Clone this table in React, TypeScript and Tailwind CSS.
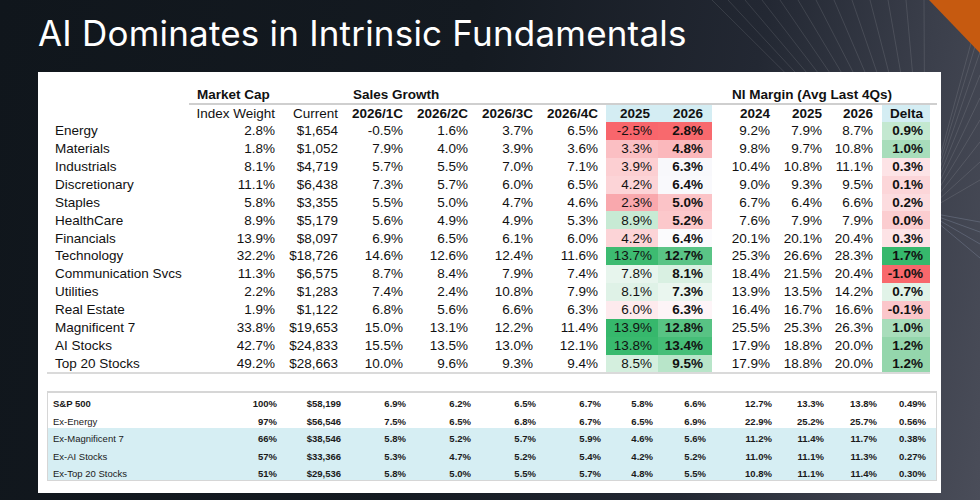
import React from 'react';

type Row = {
  label: string;
  vals: string[];
  c25: string;
  c26: string;
  cd: string;
};

const rows: Row[] = [
  { label: 'Energy', vals: ['2.8%', '$1,654', '-0.5%', '1.6%', '3.7%', '6.5%', '-2.5%', '2.8%', '9.2%', '7.9%', '8.7%', '0.9%'], c25: 'bg-[#f8666c]', c26: 'bg-[#f8696d]', cd: 'bg-[#c3e8d0]' },
  { label: 'Materials', vals: ['1.8%', '$1,052', '7.9%', '4.0%', '3.9%', '3.6%', '3.3%', '4.8%', '9.8%', '9.7%', '10.8%', '1.0%'], c25: 'bg-[#fbbfc3]', c26: 'bg-[#fbb8bc]', cd: 'bg-[#a8ddbb]' },
  { label: 'Industrials', vals: ['8.1%', '$4,719', '5.7%', '5.5%', '7.0%', '7.1%', '3.9%', '6.3%', '10.4%', '10.8%', '11.1%', '0.3%'], c25: 'bg-[#fccfd2]', c26: 'bg-[#f8f8fb]', cd: 'bg-[#fde3e6]' },
  { label: 'Discretionary', vals: ['11.1%', '$6,438', '7.3%', '5.7%', '6.0%', '6.5%', '4.2%', '6.4%', '9.0%', '9.3%', '9.5%', '0.1%'], c25: 'bg-[#fcd4d7]', c26: 'bg-[#f9f9fc]', cd: 'bg-[#fcd6d9]' },
  { label: 'Staples', vals: ['5.8%', '$3,355', '5.5%', '5.0%', '4.7%', '4.6%', '2.3%', '5.0%', '6.7%', '6.4%', '6.6%', '0.2%'], c25: 'bg-[#f9a8ad]', c26: 'bg-[#fbc3c7]', cd: 'bg-[#fcdcdf]' },
  { label: 'HealthCare', vals: ['8.9%', '$5,179', '5.6%', '4.9%', '4.9%', '5.3%', '8.9%', '5.2%', '7.6%', '7.9%', '7.9%', '0.0%'], c25: 'bg-[#c7ead4]', c26: 'bg-[#fcc8cb]', cd: 'bg-[#fbcdd0]' },
  { label: 'Financials', vals: ['13.9%', '$8,097', '6.9%', '6.5%', '6.1%', '6.0%', '4.2%', '6.4%', '20.1%', '20.1%', '20.4%', '0.3%'], c25: 'bg-[#fcd4d7]', c26: 'bg-[#fbfbfd]', cd: 'bg-[#fde3e6]' },
  { label: 'Technology', vals: ['32.2%', '$18,726', '14.6%', '12.6%', '12.4%', '11.6%', '13.7%', '12.7%', '25.3%', '26.6%', '28.3%', '1.7%'], c25: 'bg-[#3dbb71]', c26: 'bg-[#5ac486]', cd: 'bg-[#36b86c]' },
  { label: 'Communication Svcs', vals: ['11.3%', '$6,575', '8.7%', '8.4%', '7.9%', '7.4%', '7.8%', '8.1%', '18.4%', '21.5%', '20.4%', '-1.0%'], c25: 'bg-[#e7f5ed]', c26: 'bg-[#d9f0e2]', cd: 'bg-[#f8686c]' },
  { label: 'Utilities', vals: ['2.2%', '$1,283', '7.4%', '2.4%', '10.8%', '7.9%', '8.1%', '7.3%', '13.9%', '13.5%', '14.2%', '0.7%'], c25: 'bg-[#dff2e7]', c26: 'bg-[#eaf6ef]', cd: 'bg-[#e1f3e8]' },
  { label: 'Real Estate', vals: ['1.9%', '$1,122', '6.8%', '5.6%', '6.6%', '6.3%', '6.0%', '6.3%', '16.4%', '16.7%', '16.6%', '-0.1%'], c25: 'bg-[#fdeaed]', c26: 'bg-[#fdf4f7]', cd: 'bg-[#fbc6ca]' },
  { label: 'Magnificent 7', vals: ['33.8%', '$19,653', '15.0%', '13.1%', '12.2%', '11.4%', '13.9%', '12.8%', '25.5%', '25.3%', '26.3%', '1.0%'], c25: 'bg-[#36b86c]', c26: 'bg-[#58c384]', cd: 'bg-[#a8ddbb]' },
  { label: 'AI Stocks', vals: ['42.7%', '$24,833', '15.5%', '13.5%', '13.0%', '12.1%', '13.8%', '13.4%', '17.9%', '18.8%', '20.0%', '1.2%'], c25: 'bg-[#39ba6e]', c26: 'bg-[#46be78]', cd: 'bg-[#94d6ac]' },
  { label: 'Top 20 Stocks', vals: ['49.2%', '$28,663', '10.0%', '9.6%', '9.3%', '9.4%', '8.5%', '9.5%', '17.9%', '18.8%', '20.0%', '1.2%'], c25: 'bg-[#d4efde]', c26: 'bg-[#b8e5c9]', cd: 'bg-[#94d6ac]' },
];

const summary = [
  { label: 'S&P 500', bold: true, blue: false, vals: ['100%', '$58,199', '6.9%', '6.2%', '6.5%', '6.7%', '5.8%', '6.6%', '12.7%', '13.3%', '13.8%', '0.49%'] },
  { label: 'Ex-Energy', bold: false, blue: false, vals: ['97%', '$56,546', '7.5%', '6.5%', '6.8%', '6.7%', '6.5%', '6.9%', '22.9%', '25.2%', '25.7%', '0.56%'] },
  { label: 'Ex-Magnificent 7', bold: false, blue: true, vals: ['66%', '$38,546', '5.8%', '5.2%', '5.7%', '5.9%', '4.6%', '5.6%', '11.2%', '11.4%', '11.7%', '0.38%'] },
  { label: 'Ex-AI Stocks', bold: false, blue: true, vals: ['57%', '$33,366', '5.3%', '4.7%', '5.2%', '5.4%', '4.2%', '5.2%', '11.0%', '11.1%', '11.3%', '0.27%'] },
  { label: 'Ex-Top 20 Stocks', bold: false, blue: true, vals: ['51%', '$29,536', '5.8%', '5.0%', '5.5%', '5.7%', '4.8%', '5.5%', '10.8%', '11.1%', '11.4%', '0.30%'] },
];

const COLS = 'grid grid-cols-[143px_85px_63px_65px_65px_65px_65px_60px_54px_58px_52px_51px_57px]';
const SUM_COLS = 'grid grid-cols-[152px_77px_64px_65px_65px_65px_65px_52px_53px_66px_52px_53px_49px]';

function Backdrop() {
  const tops = [712, 728, 745, 762, 780, 798, 816, 834, 852, 870, 888, 906, 924];
  const rights = [10, 30, 52, 75, 98, 120, 142, 162, 180];
  const lows = [222, 232, 244, 258];
  return (
    <svg className="absolute inset-0" width="980" height="500" viewBox="0 0 980 500">
      {tops.map((x) => (
        <line key={'t' + x} x1="925" y1="212" x2={x} y2="0" stroke="#ffffff" strokeOpacity="0.16" strokeWidth="0.7" />
      ))}
      {rights.map((y) => (
        <line key={'r' + y} x1="925" y1="212" x2="980" y2={y} stroke="#ffffff" strokeOpacity="0.16" strokeWidth="0.7" />
      ))}
      {lows.map((y) => (
        <line key={'l' + y} x1="925" y1="212" x2="980" y2={y} stroke="#aab4d0" strokeOpacity="0.35" strokeWidth="0.7" />
      ))}
      <polygon points="929,0 980,0 980,53" fill="#c65a10" />
    </svg>
  );
}

function DataRow({ r }: { r: Row }) {
  return (
    <div className={`${COLS} h-[17.9px] text-[#111]`}>
      <div className="flex items-center pl-[8px] whitespace-nowrap">{r.label}</div>
      {r.vals.slice(0, 6).map((v, i) => (
        <div key={i} className="flex items-center justify-end">{v}</div>
      ))}
      <div className="pl-[8px]">
        <div className={`${r.c25} h-full flex items-center justify-end pr-[6px]`}>{r.vals[6]}</div>
      </div>
      <div className={`${r.c26} flex items-center justify-end pr-[9px] font-bold`}>{r.vals[7]}</div>
      {r.vals.slice(8, 11).map((v, i) => (
        <div key={i} className="flex items-center justify-end">{v}</div>
      ))}
      <div className="pl-[9px]">
        <div className={`${r.cd} h-full flex items-center justify-end pr-[7px] font-bold`}>{r.vals[11]}</div>
      </div>
    </div>
  );
}

export default function App() {
  return (
    <div className="relative w-[980px] h-[500px] overflow-hidden bg-[linear-gradient(100deg,#10161c_0%,#141a21_45%,#232833_72%,#3b3f4b_88%,#4a4d59_100%)]">
      <Backdrop />
      <div className="relative">
        <h1 className="pl-[38px] pt-[7px] h-[72px] text-white text-[35px] font-normal tracking-[0.2px] font-['Inter',sans-serif]">
          AI Dominates in Intrinsic Fundamentals
        </h1>
        <div className="ml-[38px] w-[903px] h-[421px] bg-white pl-[9px] pt-[14px] font-['Liberation_Sans',Arial,sans-serif] text-[13.5px] leading-none">
          <div className={`${COLS} h-[17px] font-bold text-[#111] items-center`}>
            <div />
            <div className="col-span-2 pl-[7px] whitespace-nowrap">Market Cap</div>
            <div className="col-span-4 pl-[15px] whitespace-nowrap">Sales Growth</div>
            <div className="col-span-2" />
            <div className="col-span-4 pl-[20px] whitespace-nowrap">NI Margin (Avg Last 4Qs)</div>
          </div>
          <div className="ml-[142px] w-[748px] h-[2px] bg-[#cfcfcf]" />
          <div className={`${COLS} h-[17px] text-[#111]`}>
            <div />
            <div className="flex items-center justify-end whitespace-nowrap">Index Weight</div>
            <div className="flex items-center justify-end">Current</div>
            {['2026/1C', '2026/2C', '2026/3C', '2026/4C'].map((h) => (
              <div key={h} className="flex items-center justify-end font-bold">{h}</div>
            ))}
            <div className="pl-[8px]">
              <div className="bg-[#d4edf3] h-full flex items-center justify-end pr-[8px] font-bold">2025</div>
            </div>
            <div className="bg-[#d4edf3] flex items-center justify-end pr-[9px] font-bold">2026</div>
            {['2024', '2025', '2026'].map((h) => (
              <div key={h} className="flex items-center justify-end font-bold">{h}</div>
            ))}
            <div className="pl-[9px]">
              <div className="bg-[#d4edf3] h-full flex items-center justify-end pr-[7px] font-bold">Delta</div>
            </div>
          </div>
          {rows.map((r) => (
            <DataRow key={r.label} r={r} />
          ))}
          <div className="w-[883px] h-[2px] bg-[#dadada]" />

          <div className="mt-[17px] w-[890px] border border-t-2 border-[#d6d6d6] text-[9.5px] text-[#1a1a1a]">
            {summary.map((s) => (
              <div key={s.label} className={`${SUM_COLS} h-[17.4px] ${s.blue ? 'bg-[#d6eef3]' : 'bg-white'}`}>
                <div className={`flex items-end pb-[2px] pl-[5px] whitespace-nowrap ${s.bold ? 'font-bold' : ''}`}>{s.label}</div>
                {s.vals.map((v, i) => (
                  <div key={i} className="flex items-end justify-end pb-[2px] font-bold">{v}</div>
                ))}
              </div>
            ))}
          </div>
        </div>
      </div>
    </div>
  );
}
